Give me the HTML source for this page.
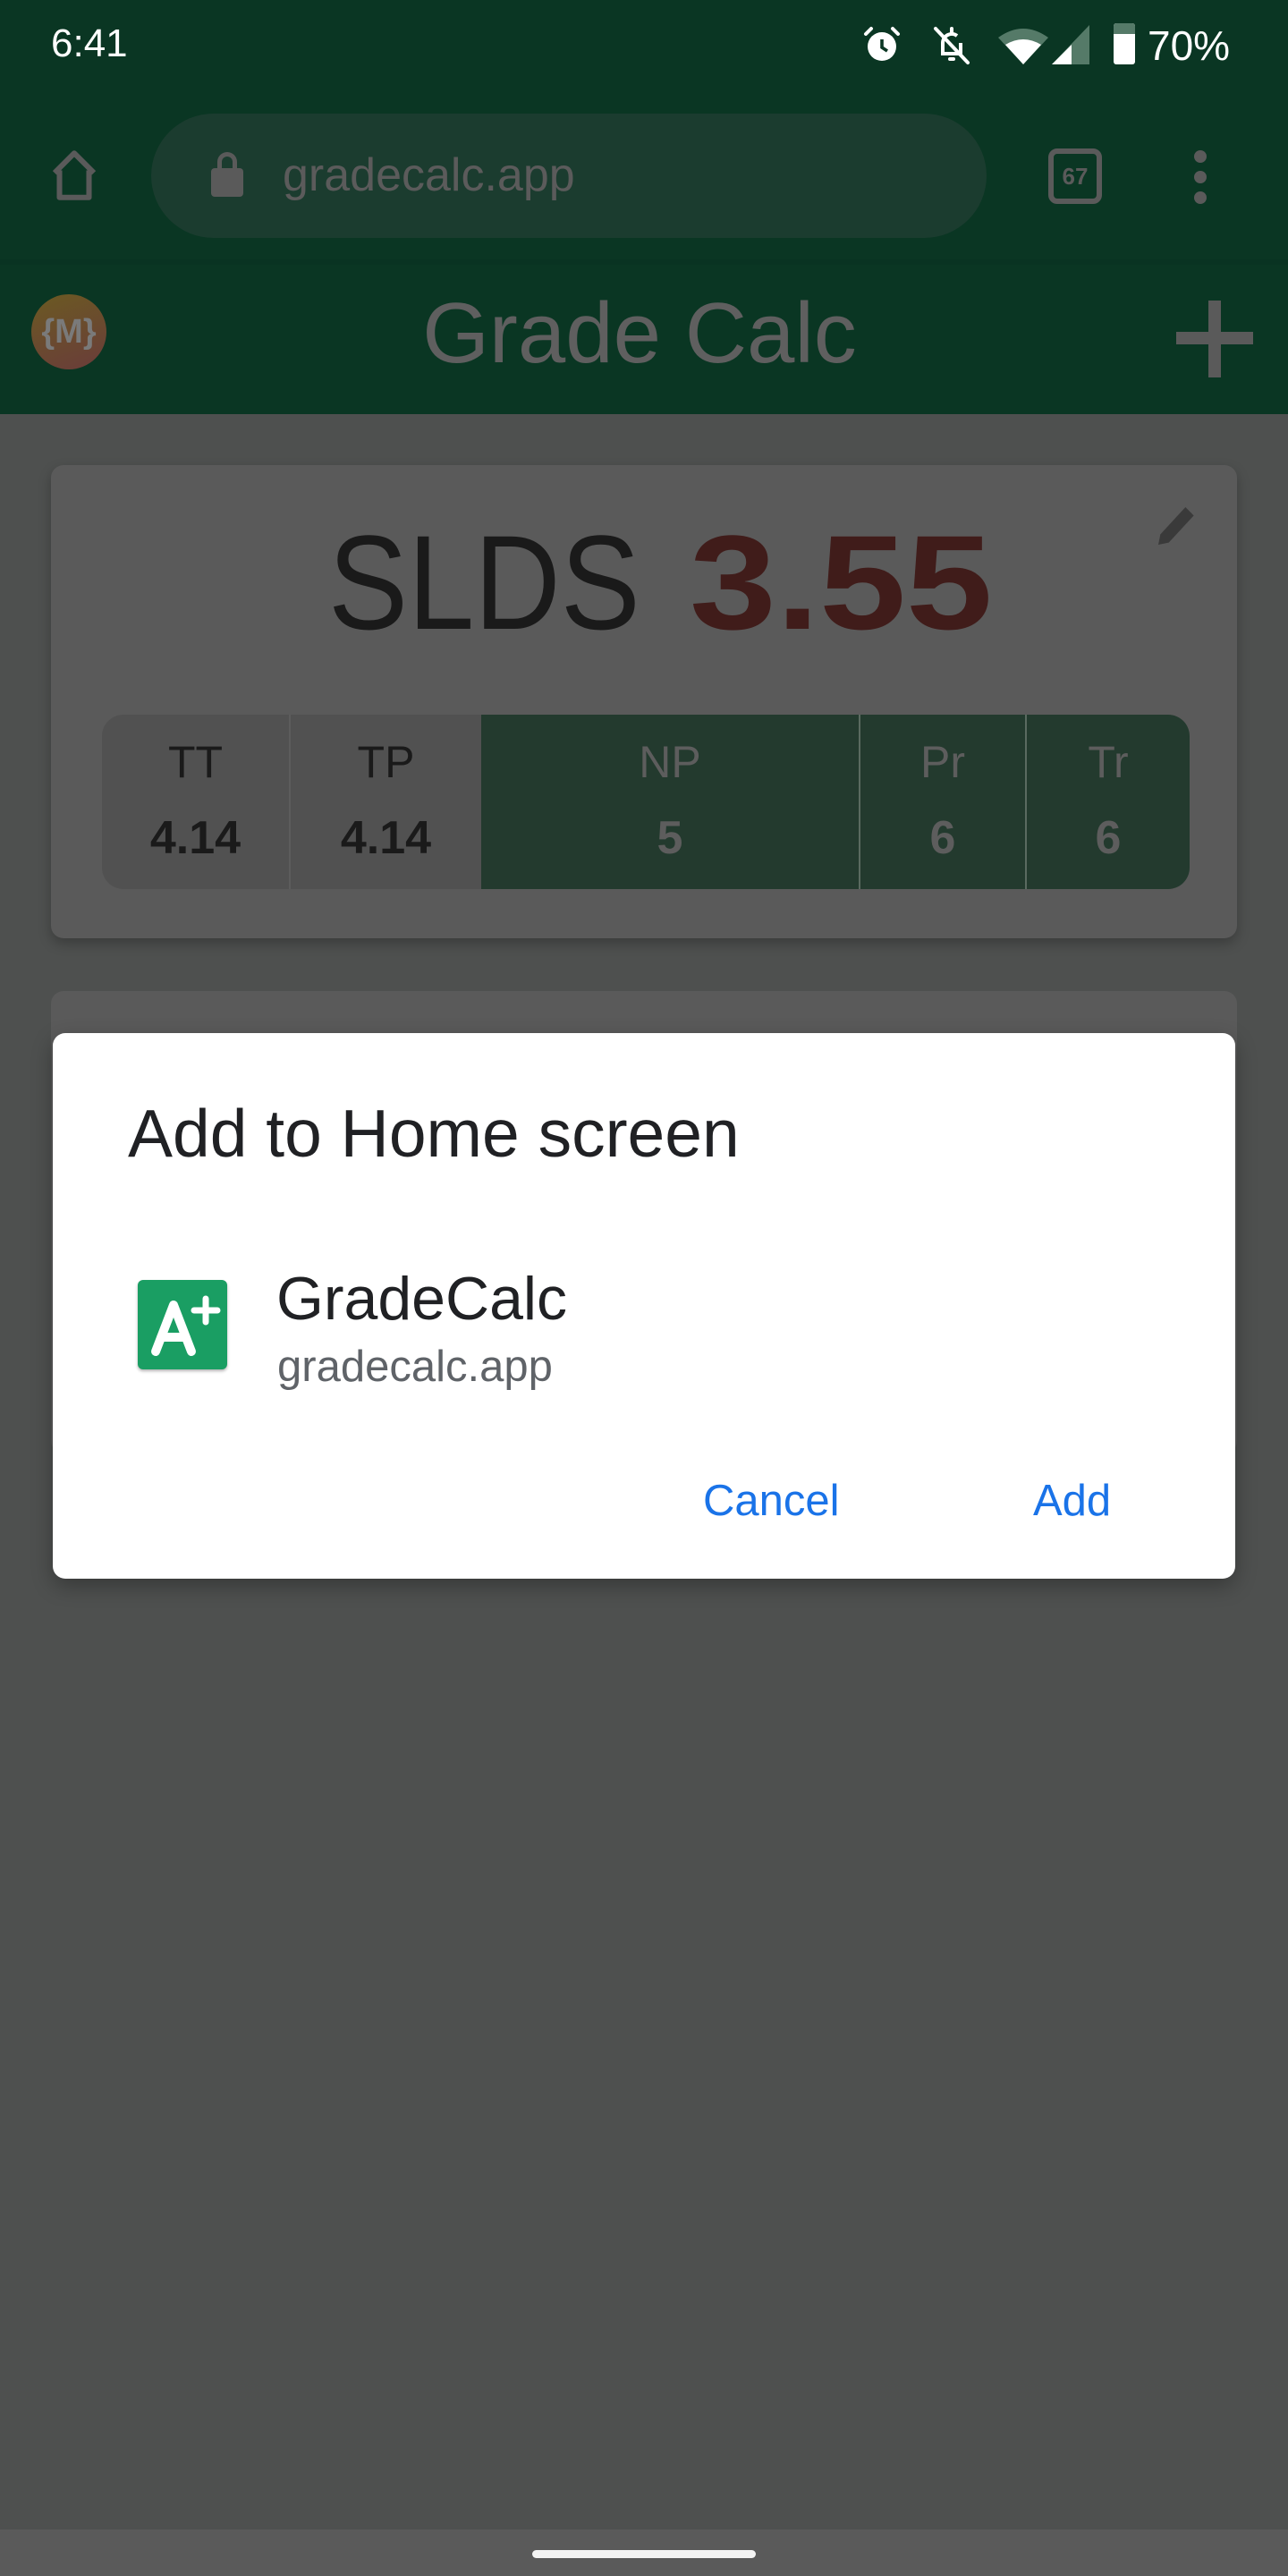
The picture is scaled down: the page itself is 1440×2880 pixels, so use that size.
<!DOCTYPE html>
<html><head><meta charset="utf-8"><style>
*{margin:0;padding:0;box-sizing:border-box}
body{width:1440px;height:2880px;background:#4e504f;position:relative;overflow:hidden;font-family:"Liberation Sans",sans-serif}
.abs{position:absolute}
</style></head><body>
<div class="abs" style="left:0;top:0;width:1440px;height:463px;background:#0a3623"></div>
<div class="abs" style="left:0;top:290px;width:1440px;height:6px;background:#093322"></div>
<!-- status bar -->
<div class="abs" style="left:57px;top:24px;color:#fff;font-size:44px;">6:41</div>
<svg class="abs" style="left:962px;top:26px" width="48" height="48" viewBox="0 0 24 24"><circle cx="12" cy="13" r="8" fill="#fff"/><path d="M12 9v4.5l3 2" stroke="#0a3623" stroke-width="1.8" fill="none"/><path d="M3 6l3-3M21 6l-3-3" stroke="#fff" stroke-width="2" stroke-linecap="round"/></svg>
<svg class="abs" style="left:1040px;top:26px" width="48" height="48" viewBox="0 0 24 24"><path d="M7 17V11a5 5 0 0 1 8-4M17 11v6H6h12" stroke="#fff" stroke-width="2" fill="none"/><path d="M11 20h2M12 3v2M3 3l18 19" stroke="#fff" stroke-width="2" stroke-linecap="round"/></svg>
<svg class="abs" style="left:1114px;top:30px" width="60" height="42" viewBox="0 0 60 42"><path d="M2 12 Q30 -8 58 12 L30 42Z" fill="#557a68"/><path d="M10 20 Q30 8 50 20 L30 42Z" fill="#fff"/></svg>
<svg class="abs" style="left:1176px;top:28px" width="44" height="44" viewBox="0 0 44 44"><path d="M42 0V44H0Z" fill="#557a68"/><path d="M22 22V44H0Z" fill="#fff"/></svg>
<div class="abs" style="left:1245px;top:26px;width:24px;height:46px;background:#fff;border-radius:3px"></div>
<div class="abs" style="left:1245px;top:26px;width:24px;height:12px;background:#557a68;border-radius:3px 3px 0 0"></div>
<div class="abs" style="left:1283px;top:24px;color:#fff;font-size:46px;">70%</div>
<!-- chrome toolbar -->
<svg class="abs" style="left:50px;top:163px" width="66" height="66" viewBox="0 0 24 24"><path d="M4 11L12 3l8 8M6 10v11h12V10" stroke="#5a5a5a" stroke-width="2.2" fill="none" stroke-linejoin="round"/></svg>
<div class="abs" style="left:169px;top:127px;width:934px;height:139px;background:#1b3c2f;border-radius:70px"></div>
<div class="abs" style="left:236px;top:188px;width:36px;height:32px;background:#5a5a5a;border-radius:4px"></div>
<div class="abs" style="left:243px;top:170px;width:22px;height:26px;border:5px solid #5a5a5a;border-bottom:none;border-radius:11px 11px 0 0"></div>
<div class="abs" style="left:316px;top:166px;color:#5b5b5b;font-size:52px;">gradecalc.app</div>
<div class="abs" style="left:1172px;top:166px;width:60px;height:62px;border:6px solid #5a5a5a;border-radius:10px;color:#5a5a5a;font-size:26px;font-weight:bold;text-align:center;line-height:50px">67</div>
<div class="abs" style="left:1335px;top:168px;width:14px;height:14px;border-radius:50%;background:#5a5a5a;box-shadow:0 23px 0 #5a5a5a,0 46px 0 #5a5a5a"></div>
<!-- app bar -->
<div class="abs" style="left:35px;top:329px;width:84px;height:84px;border-radius:50%;background:linear-gradient(160deg,#6b5a22,#6a3c3a);color:#7a7a7a;font-size:38px;font-weight:bold;text-align:center;line-height:84px">{M}</div>
<div class="abs" style="left:0;top:318px;width:1430px;text-align:center;color:#5f5f5f;font-size:96px;">Grade Calc</div>
<div class="abs" style="left:1315px;top:371px;width:86px;height:14px;background:#5a5a5a"></div>
<div class="abs" style="left:1351px;top:336px;width:14px;height:86px;background:#5a5a5a"></div>
<!-- card 1 -->
<div class="abs" style="left:57px;top:520px;width:1326px;height:529px;background:#5a5a5a;border-radius:14px;box-shadow:0 6px 14px rgba(0,0,0,.25)"></div>
<div class="abs" style="left:367px;top:565px;font-size:150px;white-space:nowrap;color:#1a1a1a;transform:scaleX(0.89);transform-origin:left top">SLDS</div>
<div class="abs" style="left:771px;top:565px;font-size:150px;white-space:nowrap;color:#401c1a;font-weight:bold;transform:scaleX(1.16);transform-origin:left top">3.55</div>
<svg class="abs" style="left:1288px;top:558px" width="56" height="60" viewBox="0 0 24 24"><path d="M3 21l1-5L16 3l4 4L8 20z" fill="#3a3a3a"/></svg>
<div class="abs" style="left:114px;top:799px;width:1216px;height:195px;border-radius:24px;overflow:hidden;display:flex;text-align:center">
 <div style="width:211px;background:#515151;border-right:2px solid #5c5c5c;color:#1a1a1a"><div style="font-size:50px;margin-top:24px">TT</div><div style="font-size:52px;font-weight:bold;margin-top:26px">4.14</div></div>
 <div style="width:213px;background:#515151;color:#1a1a1a"><div style="font-size:50px;margin-top:24px">TP</div><div style="font-size:52px;font-weight:bold;margin-top:26px">4.14</div></div>
 <div style="width:424px;background:#233a2e;border-right:2px solid #5a6a60;color:#5d5d5d"><div style="font-size:50px;margin-top:24px">NP</div><div style="font-size:52px;font-weight:bold;margin-top:26px">5</div></div>
 <div style="width:186px;background:#233a2e;border-right:2px solid #5a6a60;color:#5d5d5d"><div style="font-size:50px;margin-top:24px">Pr</div><div style="font-size:52px;font-weight:bold;margin-top:26px">6</div></div>
 <div style="flex:1;background:#233a2e;color:#5d5d5d"><div style="font-size:50px;margin-top:24px">Tr</div><div style="font-size:52px;font-weight:bold;margin-top:26px">6</div></div>
</div>
<!-- card 2 -->
<div class="abs" style="left:57px;top:1108px;width:1326px;height:517px;background:#5a5a5a;border-radius:14px"></div>
<!-- dialog -->
<div class="abs" style="left:59px;top:1155px;width:1322px;height:610px;background:#fff;border-radius:14px;box-shadow:0 8px 24px rgba(0,0,0,.3)"></div>
<div class="abs" style="left:143px;top:1224px;color:#202124;font-size:75px;">Add to Home screen</div>
<div class="abs" style="left:154px;top:1431px;width:100px;height:100px;background:#1a9e63;border-radius:6px;box-shadow:0 2px 3px rgba(0,0,0,.3)"></div>
<svg class="abs" style="left:154px;top:1431px" width="100" height="100" viewBox="0 0 100 100"><path d="M20 80L40 28L60 80M26 64H54" stroke="#fff" stroke-width="10" fill="none" stroke-linecap="round" stroke-linejoin="round"/><path d="M76 21v26M63 34h26" stroke="#fff" stroke-width="7" stroke-linecap="round"/></svg>
<div class="abs" style="left:309px;top:1413px;color:#202124;font-size:68px;">GradeCalc</div>
<div class="abs" style="left:310px;top:1500px;color:#5f6368;font-size:49px;">gradecalc.app</div>
<div class="abs" style="left:786px;top:1650px;color:#1a73e8;font-size:49px;">Cancel</div>
<div class="abs" style="left:1155px;top:1650px;color:#1a73e8;font-size:49px;">Add</div>
<!-- nav -->
<div class="abs" style="left:0;top:2828px;width:1440px;height:52px;background:#5a5a5a"></div>
<div class="abs" style="left:595px;top:2851px;width:250px;height:9px;background:#f3f3f3;border-radius:5px"></div>
</body></html>
